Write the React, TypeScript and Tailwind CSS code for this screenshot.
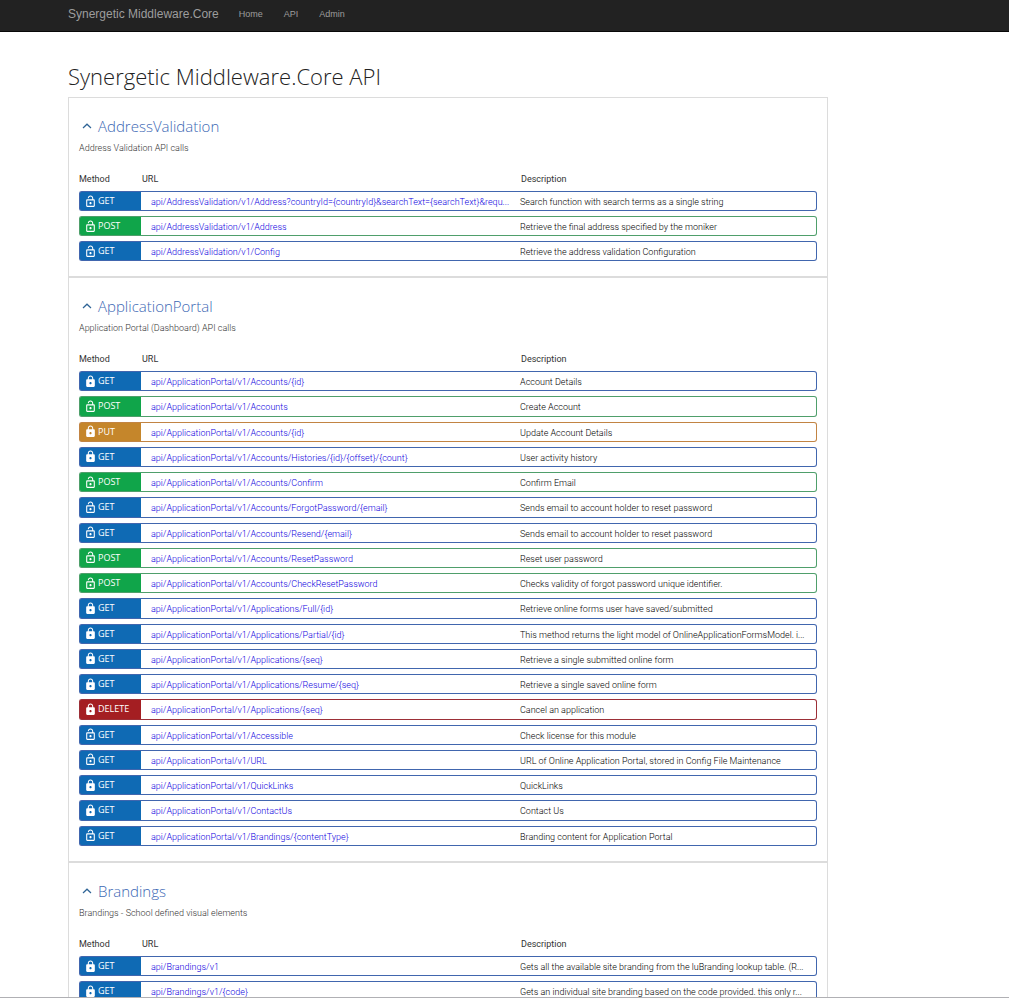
import { MdLock, MdLockOpen } from "react-icons/md";

type Method = "GET" | "POST" | "PUT" | "DELETE";
type Endpoint = [method: Method, locked: boolean, url: string, description: string];

interface Section {
  name: string;
  summary: string;
  tableClass: string;
  endpoints: Endpoint[];
}

const sections: Section[] = [
  {
    name: "AddressValidation",
    summary: "Address Validation API calls",
    tableClass: "",
    endpoints: [
      ["GET", false, "api/AddressValidation/v1/Address?countryId={countryId}&searchText={searchText}&requ...", "Search function with search terms as a single string"],
      ["POST", false, "api/AddressValidation/v1/Address", "Retrieve the final address specified by the moniker"],
      ["GET", false, "api/AddressValidation/v1/Config", "Retrieve the address validation Configuration"],
    ],
  },
  {
    name: "ApplicationPortal",
    summary: "Application Portal (Dashboard) API calls",
    tableClass: "h-[504px]",
    endpoints: [
      ["GET", true, "api/ApplicationPortal/v1/Accounts/{id}", "Account Details"],
      ["POST", false, "api/ApplicationPortal/v1/Accounts", "Create Account"],
      ["PUT", true, "api/ApplicationPortal/v1/Accounts/{id}", "Update Account Details"],
      ["GET", true, "api/ApplicationPortal/v1/Accounts/Histories/{id}/{offset}/{count}", "User activity history"],
      ["POST", false, "api/ApplicationPortal/v1/Accounts/Confirm", "Confirm Email"],
      ["GET", false, "api/ApplicationPortal/v1/Accounts/ForgotPassword/{email}", "Sends email to account holder to reset password"],
      ["GET", false, "api/ApplicationPortal/v1/Accounts/Resend/{email}", "Sends email to account holder to reset password"],
      ["POST", false, "api/ApplicationPortal/v1/Accounts/ResetPassword", "Reset user password"],
      ["POST", false, "api/ApplicationPortal/v1/Accounts/CheckResetPassword", "Checks validity of forgot password unique identifier."],
      ["GET", true, "api/ApplicationPortal/v1/Applications/Full/{id}", "Retrieve online forms user have saved/submitted"],
      ["GET", true, "api/ApplicationPortal/v1/Applications/Partial/{id}", "This method returns the light model of OnlineApplicationFormsModel. i..."],
      ["GET", true, "api/ApplicationPortal/v1/Applications/{seq}", "Retrieve a single submitted online form"],
      ["GET", true, "api/ApplicationPortal/v1/Applications/Resume/{seq}", "Retrieve a single saved online form"],
      ["DELETE", true, "api/ApplicationPortal/v1/Applications/{seq}", "Cancel an application"],
      ["GET", false, "api/ApplicationPortal/v1/Accessible", "Check license for this module"],
      ["GET", false, "api/ApplicationPortal/v1/URL", "URL of Online Application Portal, stored in Config File Maintenance"],
      ["GET", true, "api/ApplicationPortal/v1/QuickLinks", "QuickLinks"],
      ["GET", true, "api/ApplicationPortal/v1/ContactUs", "Contact Us"],
      ["GET", false, "api/ApplicationPortal/v1/Brandings/{contentType}", "Branding content for Application Portal"],
    ],
  },
  {
    name: "Brandings",
    summary: "Brandings - School defined visual elements",
    tableClass: "",
    endpoints: [
      ["GET", true, "api/Brandings/v1", "Gets all the available site branding from the luBranding lookup table. (R..."],
      ["GET", true, "api/Brandings/v1/{code}", "Gets an individual site branding based on the code provided. this only r..."],
    ],
  },
];

const methodStyles: Record<Method, { fill: string; line: string }> = {
  GET: { fill: "bg-[#0f6ab4]", line: "border-[#4166ae]" },
  POST: { fill: "bg-[#10a54a]", line: "border-[#4f9f6b]" },
  PUT: { fill: "bg-[#c5862b]", line: "border-[#c28443]" },
  DELETE: { fill: "bg-[#a41e22]", line: "border-[#9c2f37]" },
};

function EndpointRow({ endpoint }: { endpoint: Endpoint }) {
  const [method, locked, url, description] = endpoint;
  const { fill, line } = methodStyles[method];
  const Icon = locked ? MdLock : MdLockOpen;
  return (
    <tr className="h-5">
      <td className={`rounded-l-[3px] border border-r-0 p-0 pl-1 ${fill} ${line}`}>
        <span className="flex items-center gap-px font-['Open_Sans',sans-serif] text-[9px] leading-[18px] font-medium text-white">
          <Icon className="size-[13px]" aria-hidden="true" />
          {method}
        </span>
      </td>
      <td className={`truncate border-y p-0 pt-[2px] pl-[10px] leading-4 ${line}`}>
        <a href="#" className="text-[#0d00e0]">{url}</a>
      </td>
      <td className={`truncate rounded-r-[3px] border border-l-0 p-0 pt-[2px] pr-1 pl-[10px] leading-4 text-black ${line}`}>{description}</td>
    </tr>
  );
}

function ApiSection({ section }: { section: Section }) {
  return (
    <section className="border border-[#dcdcdc] px-[10px] pt-4 pb-[10px]">
      <h2 className="text-[15px] leading-6 font-light text-[#3c68b4]">
        <button type="button" aria-expanded="true" className="flex items-center gap-[6px] pl-[3px]">
          <svg viewBox="0 0 10 6" className="h-[6px] w-[10px]" fill="none" stroke="#2f6496" strokeWidth="1.2" aria-hidden="true">
            <path d="M1 5L5 1.2L9 5" />
          </svg>
          {section.name}
        </button>
      </h2>
      <p className="mt-[3px] font-['Roboto',sans-serif] text-[9px] leading-[14px] font-light text-[#333]">{section.summary}</p>
      <table className={`mt-3 w-full table-fixed border-separate border-spacing-x-0 border-spacing-y-[5px] font-['Roboto',sans-serif] text-[9px] leading-[18px] font-light ${section.tableClass}`}>
        <colgroup>
          <col className="w-[62px]" />
          <col className="w-1/2" />
          <col />
        </colgroup>
        <thead>
          <tr className="text-left leading-[14px] text-[#333]">
            <th className="p-0 font-normal">Method</th>
            <th className="p-0 pl-px font-normal">URL</th>
            <th className="p-0 pl-[11px] font-normal">Description</th>
          </tr>
        </thead>
        <tbody>
          {section.endpoints.map((endpoint, i) => (
            <EndpointRow key={i} endpoint={endpoint} />
          ))}
        </tbody>
      </table>
    </section>
  );
}

export default function App() {
  return (
    <div className="flex h-screen flex-col bg-white pb-[2px] font-['Open_Sans','Noto_Sans',sans-serif] text-[#333]">
      <nav className="flex h-8 shrink-0 items-center border-b border-[#080808] bg-[#222] pb-1 pl-[68px] font-['Liberation_Sans',sans-serif] text-[9px] text-[#9d9d9d]">
        <a href="#" className="mr-5 text-[12px] text-[#9d9d9d]">Synergetic Middleware.Core</a>
        <div className="flex gap-[21px] pt-[2px]">
          <a href="#">Home</a>
          <a href="#">API</a>
          <a href="#">Admin</a>
        </div>
      </nav>
      <main className="min-h-0 flex-1 overflow-hidden border-b border-[#b0b0b4] px-[68px] pt-7">
        <h1 className="text-[22px] leading-8 font-light text-[#222]">Synergetic Middleware.Core API</h1>
        <div className="mt-[5px] max-w-[760px]">
          {sections.map((section) => (
            <ApiSection key={section.name} section={section} />
          ))}
        </div>
      </main>
    </div>
  );
}
